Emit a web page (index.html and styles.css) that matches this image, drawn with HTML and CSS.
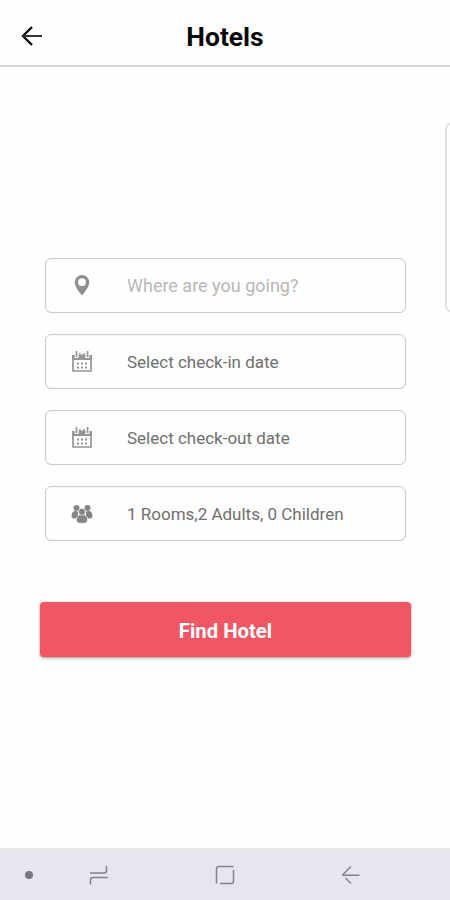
FILE: index.html
```html
<!DOCTYPE html>
<html lang="en">
<head>
<meta charset="utf-8">
<title>Hotels</title>
<link rel="stylesheet" href="styles.css">
</head>
<body>
<svg class="defs" width="0" height="0">
  <symbol id="calendar" viewBox="0 0 20 22">
    <path fill="none" stroke="currentColor" stroke-width="1.700" d="M1 6v14h18V6"/>
    <path fill="currentColor" d="M0 4h2.600v3h4V3.500h6.800V7h4V4H20v5H0zM3.600 0h1.700v6H3.600zM14.700 0h1.700v6h-1.700zM7.200 2h1.400v2H7.200zM11.400 2h1.400v2h-1.400z"/>
    <path stroke="currentColor" stroke-width="2" stroke-dasharray="2 2" d="M5 12.500h10M5 16.500h10"/>
  </symbol>
</svg>
<div class="screen">
  <header class="header">
    <svg class="back" width="24" height="22" viewBox="0 0 24 22" fill="none" stroke="#111" stroke-width="2.400"><path d="M12 2 3 11l9 9"/><path stroke="#333" stroke-width="2" d="M2.500 11H22"/></svg>
    <h1 class="title">Hotels</h1>
  </header>
  <main class="main">
    <aside class="side-card"></aside>
    <form class="form">
      <div class="field">
        <svg class="icon pin" width="22" height="22" viewBox="0 0 22 22"><path fill="#909090" fill-rule="evenodd" d="M11 1a7.300 7.300 0 0 0-7.300 7.300C3.700 13.500 11 21.500 11 21.500s7.300-8 7.300-13.200A7.300 7.300 0 0 0 11 1zm0 3.300a3.900 3.900 0 1 1 0 7.800 3.900 3.900 0 0 1 0-7.800z"/></svg>
        <span class="label destination">Where are you going?</span>
      </div>
      <div class="field">
        <svg class="icon" width="20" height="22"><use href="#calendar"/></svg>
        <span class="label">Select check-in date</span>
      </div>
      <div class="field">
        <svg class="icon" width="20" height="22"><use href="#calendar"/></svg>
        <span class="label">Select check-out date</span>
      </div>
      <div class="field">
        <svg class="icon" width="22" height="20" viewBox="0 0 22 20" fill="#858585"><circle cx="5.500" cy="4" r="3"/><circle cx="16.500" cy="4" r="3"/><path d="M.5 12c0-3.500 1.500-5 4.200-5 1.300 0 2 .5 2.300 1.500L7 12l-2 2.500C2 14.500.5 14 .5 12zM21.500 12c0-3.500-1.500-5-4.200-5-1.300 0-2 .5-2.300 1.500l0 3.500 2 2.500c3 0 4.500-.5 4.500-2.500z"/><g stroke="#fff" stroke-width=".6"><path d="M5.500 15.500c0-3.500 2-5 5.500-5s5.500 1.500 5.500 5-2 3.700-5.500 3.700-5.500-.2-5.500-3.700z"/><circle cx="11" cy="7.800" r="3.500"/></g></svg>
        <span class="label">1 Rooms,2 Adults, 0 Children</span>
      </div>
      <button class="submit" type="button">Find Hotel</button>
    </form>
  </main>
  <nav class="nav">
    <i class="dot"></i>
    <svg width="20" height="20" viewBox="0 0 20 20" fill="none" stroke="#82828d" stroke-width="1.500"><path d="M1 8h14q2.500 0 2.500-2.500V1M19 12.500H4Q1.500 12.500 1.500 15v4.500"/></svg>
    <svg width="20" height="20" viewBox="0 0 20 20" fill="none" stroke="#82828d" stroke-width="1.500"><path d="M1.500 18.500V4q0-2.500 2.500-2.500h14.500M18.500 5v11q0 2.500-2.500 2.500H5"/></svg>
    <svg width="20" height="20" viewBox="0 0 20 20" fill="none" stroke="#82828d" stroke-width="1.500"><path d="M10 1.500 2 9.500q-.8.800 1 .800h15.500M4.500 13l5.500 5.500"/></svg>
  </nav>
</div>
</body>
</html>
```
FILE: styles.css
```css
* { box-sizing: border-box; }
body { margin: 0; background: #fff; font-family: Roboto, sans-serif; }
.defs { display: block; }
.screen { height: 900px; display: flex; flex-direction: column; overflow: hidden; background: #fefefe; }
.header { height: 67px; flex: none; display: grid; grid-template-columns: 46px 1fr 46px; align-items: center; border-bottom: 2px solid #d6d6d6; padding-top: 8px; }
.back { margin: 0 0 2px 20px; }
.title { margin: 0; text-align: center; font-size: 26.400px; line-height: 30px; font-weight: 700; color: #080808; }
.main { flex: 1; display: flex; flex-direction: column; }
.side-card { width: 20px; height: 189px; flex: none; margin: 56px -15px 0 auto; border: 2px solid #e0e0e0; border-radius: 6px; }
.form { display: flex; flex-direction: column; gap: 21px; margin: -54px 44px 0 45px; }
.field { height: 55px; display: grid; grid-template-columns: 72px 1fr; align-items: center; border: 1px solid #ccc; border-radius: 6px; box-shadow: inset 0 0 1px #ccc; color: #959595; }
.icon { justify-self: center; }
.pin { margin-bottom: 2px; }
.label { padding: 1px 0 0 9px; font-size: 17px; line-height: 22px; color: #707070; white-space: nowrap; }
.destination { padding-top: 0; font-size: 18px; color: #b8b8b8; }
.submit { height: 55px; margin: 40px -5px 0; padding: 2px 0 0; border: 0; border-radius: 4px; background: #f05663; box-shadow: 0 1px 3px rgba(70, 40, 30, .5); color: #fff; font: 700 20.300px/24px Roboto, sans-serif; }
.nav { height: 52px; flex: none; display: grid; grid-template-columns: 57px 84px 168px 84px; justify-items: center; align-items: center; background: #e6e6f0; border-top: 4px solid #e7e7ea; padding-bottom: 3px; }
.dot { width: 8px; height: 8px; border-radius: 50%; background: #777781; }
```
